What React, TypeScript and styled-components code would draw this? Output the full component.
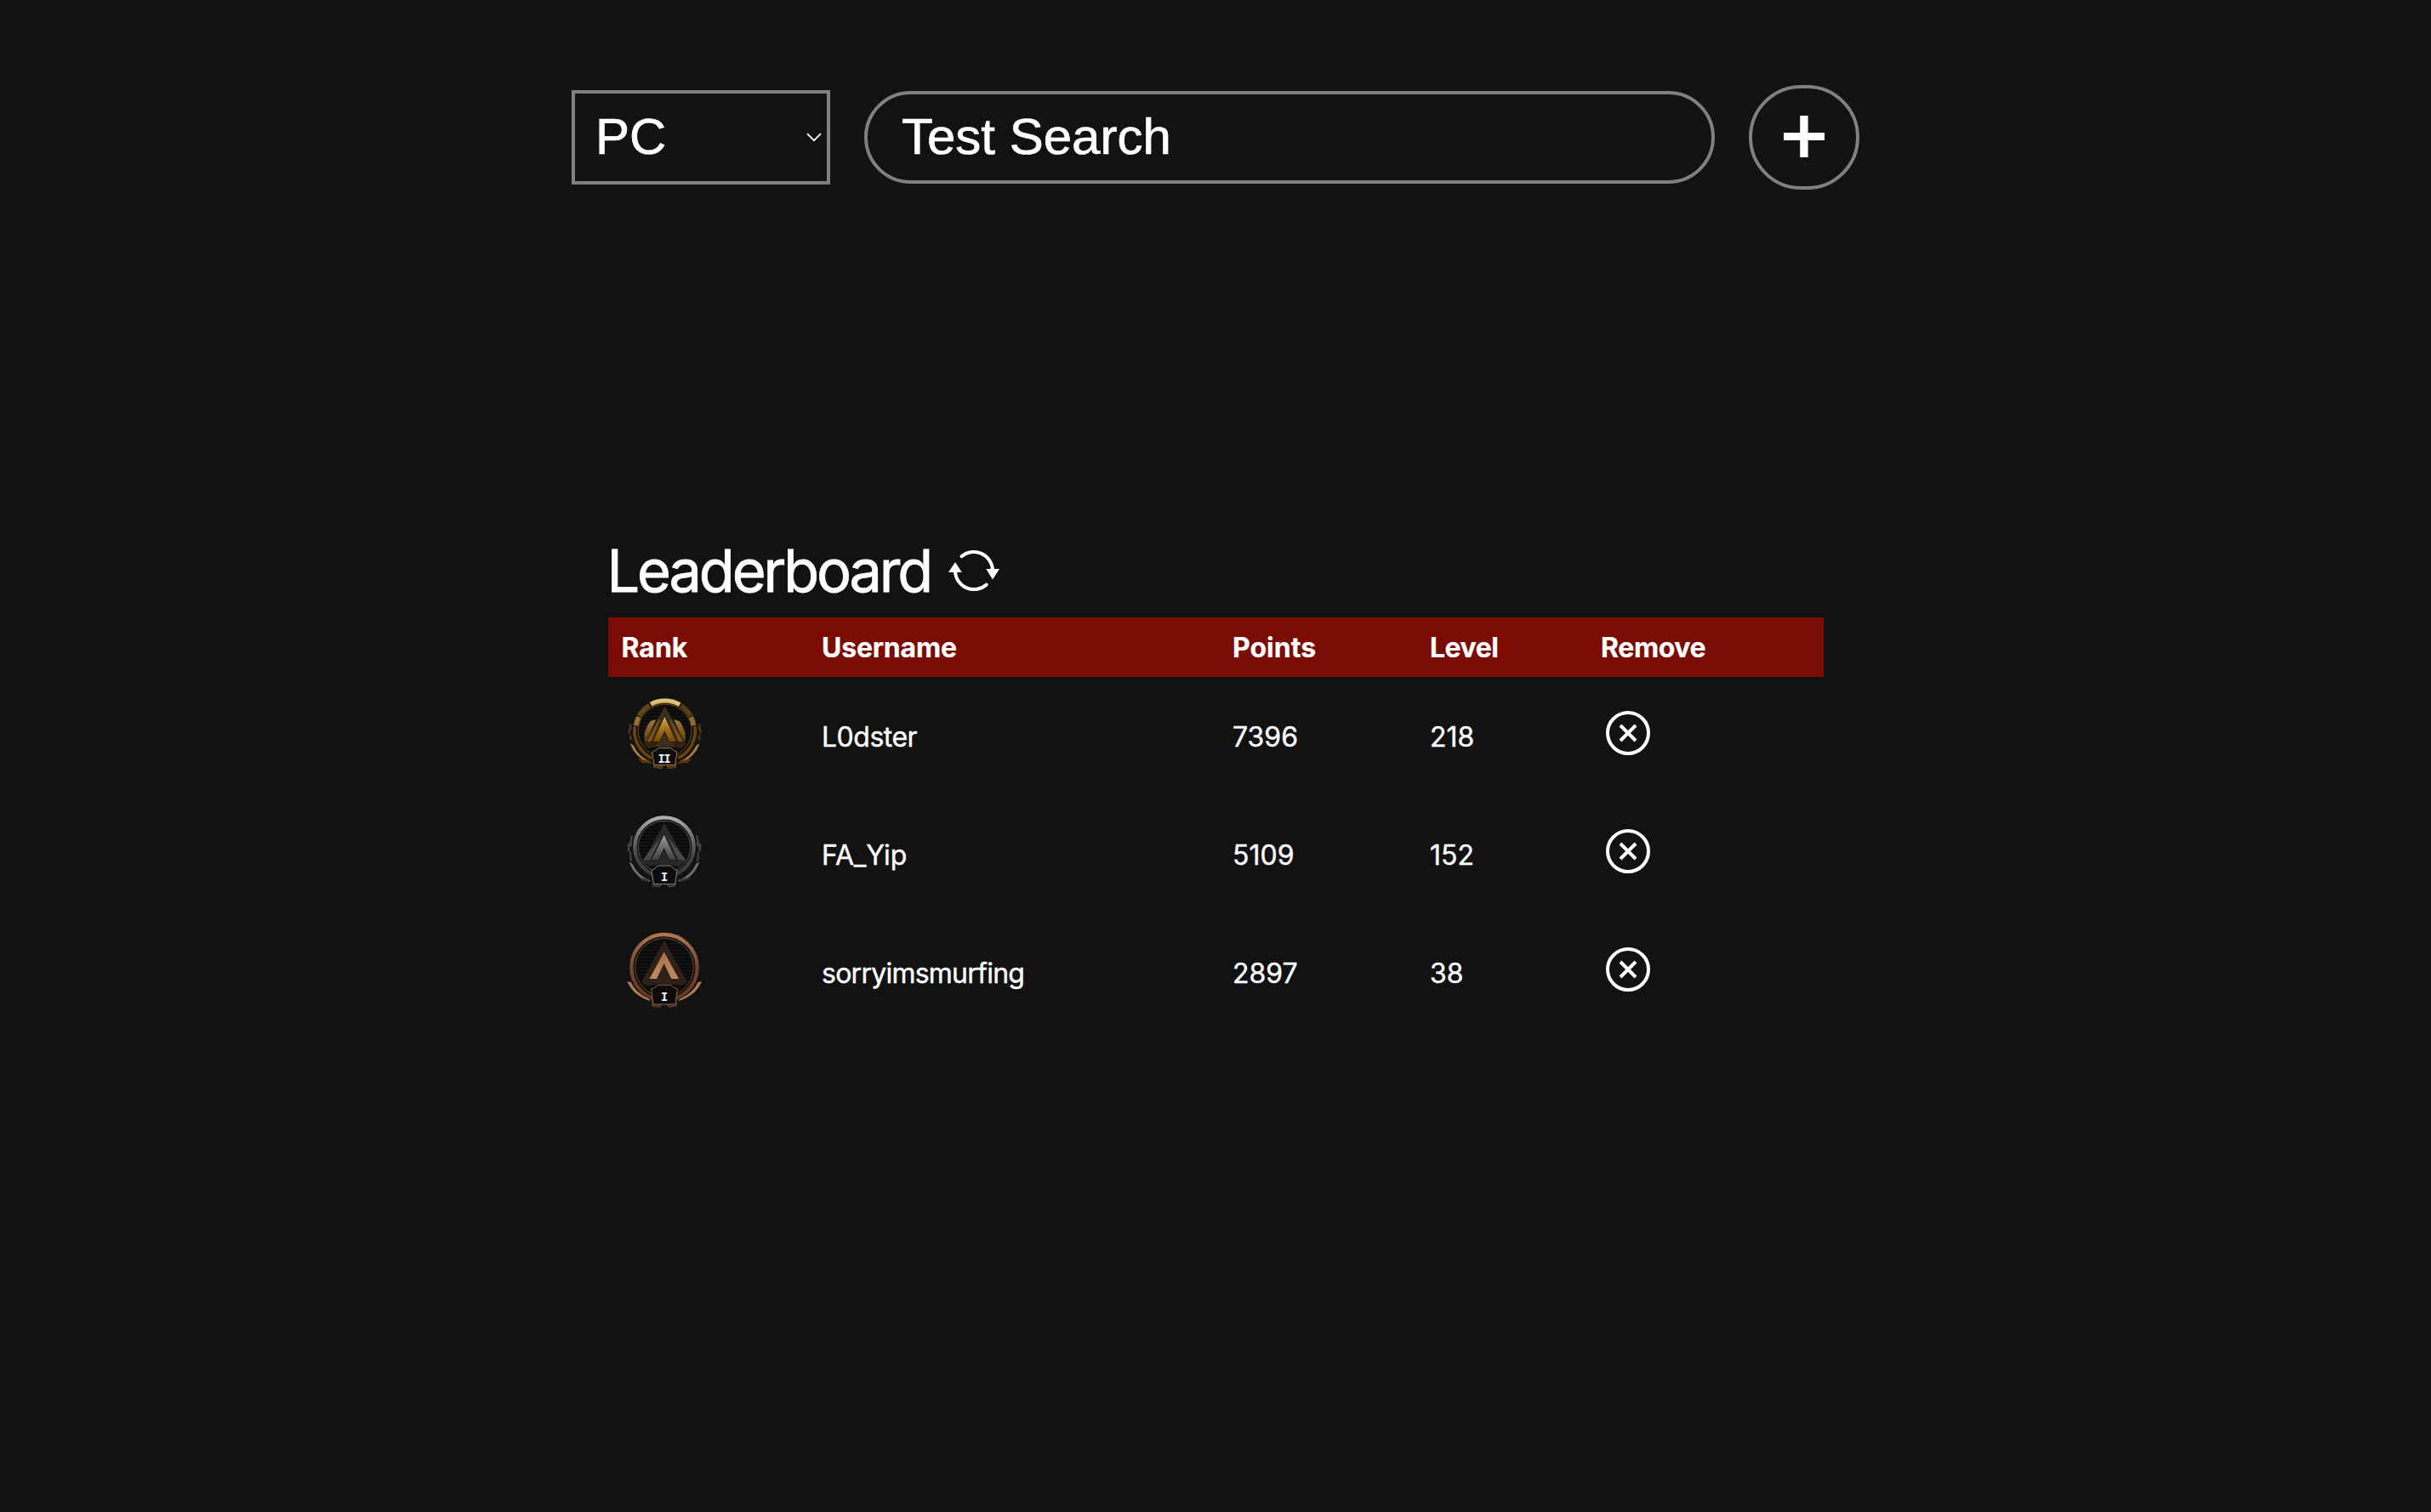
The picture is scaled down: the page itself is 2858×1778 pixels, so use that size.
import React from "react";
import styled, { createGlobalStyle } from "styled-components";

const Global = createGlobalStyle`
  *, *::before, *::after { box-sizing: border-box; }
  body {
    margin: 0;
    background: #121212;
    color: #fff;
    font-family: Inter, "Liberation Sans", sans-serif;
  }
`;

const Page = styled.main`
  display: flex;
  flex-direction: column;
  align-items: center;
  min-height: 1778px;
  padding-top: 100px;
  background: #121212;
`;

const SearchBar = styled.form`
  display: flex;
  align-items: center;
  gap: 40px;
  height: 123px;
`;

const Platform = styled.div`
  display: flex;
  align-items: center;
  justify-content: space-between;
  width: 304px;
  height: 111px;
  padding: 0 6px 2px 24px;
  border: 4px solid #808080;
  font: 60px "Liberation Sans", Arial, sans-serif;
  -webkit-text-stroke: 0.7px #fff;
`;

const Chevron = styled.svg`
  display: block;
  margin-top: 2px;
`;

const SearchInput = styled.input`
  width: 1000px;
  height: 109px;
  padding: 0 40px 2px;
  border: 4px solid #808080;
  border-radius: 60px;
  background: transparent;
  color: #fff;
  outline: none;
  font: 60px "Liberation Sans", Arial, sans-serif;
  -webkit-text-stroke: 0.7px #fff;
  &::placeholder { color: #fff; opacity: 1; }
`;

const AddButton = styled.button`
  display: flex;
  align-items: center;
  justify-content: center;
  width: 130px;
  height: 123px;
  padding: 0 0 2px;
  border: 4px solid #808080;
  border-radius: 65px;
  background: transparent;
`;

const Board = styled.section`
  width: 1429px;
  margin-top: 413px;
`;

const TitleRow = styled.header`
  display: flex;
  align-items: flex-start;
  height: 90px;
`;

const Title = styled.h1`
  width: 401px;
  margin: 0 0 0 -1px;
  font-size: 68.5px;
  font-weight: 400;
  line-height: 71px;
  letter-spacing: -3.15px;
  white-space: nowrap;
  -webkit-text-stroke: 0.8px #fff;
`;

const RefreshButton = styled.button`
  display: flex;
  margin: 9px 0 0;
  padding: 0;
  border: 0;
  background: transparent;
`;

const Row = styled.div<{ $head?: boolean }>`
  display: grid;
  grid-template-columns: 235.5px 483px 232px 201px 1fr;
  align-items: center;
  height: ${(p) => (p.$head ? 70 : 139)}px;
  padding-left: 16px;
  background: ${(p) => (p.$head ? "#7a0c04" : "transparent")};
  font-size: 32px;
  font-weight: ${(p) => (p.$head ? 700 : 400)};
`;

const Cell = styled.span<{ $track?: number; $body?: boolean }>`
  padding-top: ${(p) => (p.$body ? 2 : 0)}px;
  letter-spacing: ${(p) => p.$track ?? 0}px;
  white-space: nowrap;
  -webkit-text-stroke: ${(p) => (p.$body ? 0.4 : 0.2)}px #fff;
`;

const RemoveButton = styled.button`
  display: flex;
  width: 52px;
  height: 52px;
  margin: 0 0 7px 5.5px;
  padding: 0;
  border: 0;
  background: transparent;
`;

const Badge = styled.svg<{ $top: number }>`
  display: block;
  align-self: start;
  width: 110px;
  height: 110px;
  margin: ${(p) => p.$top}px 0 0 -1px;
`;

const Numeral = styled.text`
  fill: #f4f4f4;
  font: bold 41px "DejaVu Sans Mono", "Liberation Mono", monospace;
  letter-spacing: -4px;
`;

/** Arc along a circle; angles in degrees clockwise from twelve o'clock. */
function arc(cx: number, cy: number, r: number, from: number, to: number) {
  const at = (deg: number) => {
    const a = (deg * Math.PI) / 180;
    return `${(cx + r * Math.sin(a)).toFixed(1)} ${(cy - r * Math.cos(a)).toFixed(1)}`;
  };
  return `M${at(from)}A${r} ${r} 0 ${to - from > 180 ? 1 : 0} 1 ${at(to)}`;
}

function Scanlines({ id }: { id: string }) {
  return (
    <pattern id={id} width="10" height="12" patternUnits="userSpaceOnUse">
      <rect width="10" height="12" fill="#0b0b0c" />
      <rect width="10" height="3" fill="#161617" />
    </pattern>
  );
}

function GoldBadge() {
  return (
    <Badge $top={14} viewBox="0 0 330 330">
      <defs>
        <Scanlines id="gold-lines" />
        <linearGradient id="gold-face" x1="0" y1="0" x2="0" y2="1">
          <stop offset="0" stopColor="#d9b25a" />
          <stop offset="0.45" stopColor="#a8741f" />
          <stop offset="1" stopColor="#7a4600" />
        </linearGradient>
        <linearGradient id="gold-wing" x1="0" y1="0" x2="0" y2="1">
          <stop offset="0" stopColor="#a07b3a" />
          <stop offset="1" stopColor="#663b06" />
        </linearGradient>
      </defs>
      <circle cx="155" cy="148" r="114" fill="#14110c" />
      <g fill="none" strokeWidth="17">
        <path d={arc(155, 148, 106, -28, 30)} stroke="#c0994a" />
        <path d={arc(155, 148, 107, -27, 29)} stroke="#dfc27c" strokeWidth="11" />
        <path d={arc(155, 148, 105, 33, 60)} stroke="#5a3e16" />
        <path d={arc(155, 148, 105, -60, -31)} stroke="#634519" />
        <path d={arc(155, 148, 104, 62, 80)} stroke="#8d6a30" />
        <path d={arc(155, 148, 104, -80, -62)} stroke="#987234" />
        <path d={arc(155, 148, 107, 82, 154)} stroke="#6b4309" strokeWidth="11" />
        <path d={arc(155, 148, 107, -154, -82)} stroke="#6b4309" strokeWidth="11" />
      </g>
      <circle cx="155" cy="148" r="94" fill="url(#gold-lines)" stroke="#6c491e" strokeWidth="3" />
      <path d="M29 120l8 8v18l-5 4v12l6 6v16l-8-6v-16l-4-6v-12l4-5zM281 120l-8 8v18l5 4v12l-6 6v16l8-6v-16l4-6v-12l-4-5z" fill="#4a3721" />
      <path d="M32 193l12 6q18 40 60 58l-7 5Q49 240 32 193zM278 193l-12 6q-18 40-60 58l7 5q48-22 65-69z" fill="#a97b3a" />
      <path d="M60 246l42 8 12 10-40-3zM250 246l-42 8-12 10 40-3z" fill="#5b3706" />
      <path d="M155 62l72 128-16 20-30-6h-52l-30 6-16-20z" fill="#39301f" />
      <path d="M82 187h48l-12 20-36-6zM180 187h48v14l-36 6z" fill="#33210b" />
      <path d="M104 114l20-6-36 76h-5v-30q8-14 10-24zM206 114l-20-6 36 76h5v-30q-8-14-10-24z" fill="url(#gold-wing)" />
      <path d="M134 108l3 4-31 74H92zM176 108l-3 4 31 74h14z" fill="#7d5417" />
      <path d="M154 98l41 88h-24l-17-38-18 38h-23z" fill="url(#gold-face)" stroke="#1b150b" strokeWidth="5" paintOrder="stroke" />
      <path d="M116 260v18l30 3v-13zM194 260v18l-30 3v-13z" fill="#503213" stroke="#775026" strokeWidth="2" />
      <path d="M134 209h42l16 12 6 2-7 46h-74l-7-46 6-2z" fill="#0c0d0e" stroke="#a17b48" strokeWidth="3" />
      <Numeral x="130.500" y="260">II</Numeral>
    </Badge>
  );
}

function SilverBadge() {
  return (
    <Badge $top={15} viewBox="0 0 330 330">
      <defs>
        <Scanlines id="silver-lines" />
        <linearGradient id="silver-ring" x1="0" y1="0" x2="0" y2="1">
          <stop offset="0" stopColor="#b0b0b0" />
          <stop offset="0.3" stopColor="#727272" />
          <stop offset="0.7" stopColor="#414043" />
          <stop offset="1" stopColor="#39383b" />
        </linearGradient>
        <linearGradient id="silver-face" x1="0" y1="0" x2="0" y2="1">
          <stop offset="0" stopColor="#a5a5a5" />
          <stop offset="0.5" stopColor="#6a696b" />
          <stop offset="1" stopColor="#424043" />
        </linearGradient>
        <linearGradient id="silver-wing" x1="0" y1="0" x2="0" y2="1">
          <stop offset="0" stopColor="#6c6b6d" />
          <stop offset="1" stopColor="#464548" />
        </linearGradient>
      </defs>
      <circle cx="153" cy="138" r="104" fill="#111112" stroke="url(#silver-ring)" strokeWidth="13" />
      <circle cx="153" cy="138" r="92" fill="url(#silver-lines)" stroke="#616163" strokeWidth="2.5" />
      <path d="M35 96l-4 26-8 6v22l8 6v28l10 8q-6-24-4-36l-6-4v-14l8-4q-2-18 3-34zM271 96l4 26 8 6v22l-8 6v28l-10 8q6-24 4-36l6-4v-14l-8-4q2-18-3-34z" fill="#434245" />
      <path d="M29 190l12 8q18 42 64 58l-7 5Q46 243 29 190zM277 190l-12 8q-18 42-64 58l7 5q52-18 69-71z" fill="#737275" />
      <path d="M60 244l36 8 6 10-30-6zM246 244l-36 8-6 10 30-6z" fill="#343336" />
      <path d="M153 54l76 134-24 18-22-4h-60l-22 4-24-18z" fill="#28282a" />
      <path d="M134 108l-42 76H78zM172 108l42 76h14z" fill="#49484b" />
      <path d="M141 101l-39 83H91zM165 101l39 83h11z" fill="url(#silver-wing)" />
      <path d="M152 95l43 89h-23l-20-43-20 43h-24z" fill="url(#silver-face)" stroke="#151516" strokeWidth="5" paintOrder="stroke" />
      <path d="M114 258v18l24 3 4-8zM192 258v18l-24 3-4-8z" fill="#303033" stroke="#555458" strokeWidth="2" />
      <path d="M131 204h44l15 13 8 3-7 49h-76l-7-49 8-3z" fill="#0b0c0d" stroke="#828185" strokeWidth="3" />
      <Numeral x="141" y="258">I</Numeral>
    </Badge>
  );
}

function BronzeBadge() {
  return (
    <Badge $top={11} viewBox="0 0 330 330">
      <defs>
        <Scanlines id="bronze-lines" />
        <linearGradient id="bronze-ring" x1="0" y1="0" x2="0" y2="1">
          <stop offset="0" stopColor="#b17650" />
          <stop offset="0.45" stopColor="#75482e" />
          <stop offset="1" stopColor="#5e341c" />
        </linearGradient>
        <linearGradient id="bronze-face" x1="0" y1="0" x2="0" y2="1">
          <stop offset="0" stopColor="#a8714d" />
          <stop offset="1" stopColor="#c08a60" />
        </linearGradient>
      </defs>
      <circle cx="153" cy="158" r="116" fill="#111010" stroke="url(#bronze-ring)" strokeWidth="13" />
      <circle cx="153" cy="158" r="103" fill="url(#bronze-lines)" stroke="#7b4f37" strokeWidth="2.5" />
      <path d="M22 207l13 3q17 38 67 61v5Q41 255 22 207zM285 207l-13 3q-17 38-67 61v5q61-21 80-69z" fill="#b07c5a" />
      <path d="M153 63l74 134 8 12-24 14-28-6h-60l-28 6-24-14 8-12z" fill="#2f201a" />
      <path d="M152 103l52 95h-26l-26-54-26 54h-25z" fill="url(#bronze-face)" />
      <path d="M110 277v18l28 3 4-8zM196 277v18l-28 3-4-8z" fill="#4a2d20" stroke="#704730" strokeWidth="2" />
      <path d="M131 220h44l15 11 9 3-7 54h-78l-7-54 9-3z" fill="#0c0b0b" stroke="#8f6146" strokeWidth="3" />
      <Numeral x="141" y="275">I</Numeral>
    </Badge>
  );
}

function RemoveIcon() {
  return (
    <svg width="52" height="52" viewBox="0 0 52 52" fill="none" stroke="#fff" strokeWidth="4">
      <circle cx="26" cy="26" r="24" />
      <path d="M17 17l18 18M35 17L17 35" />
    </svg>
  );
}

const players = [
  { name: "L0dster", track: -0.5, points: "7396", level: "218", badge: <GoldBadge /> },
  { name: "FA_Yip", track: -0.1, points: "5109", level: "152", badge: <SilverBadge /> },
  { name: "sorryimsmurfing", track: -0.75, points: "2897", level: "38", badge: <BronzeBadge /> },
];

export default function App() {
  return (
    <Page>
      <Global />
      <SearchBar>
        <Platform>
          PC
          <Chevron width="18" height="11" viewBox="0 0 18 11" fill="none" stroke="#fff" strokeWidth="1.8">
            <path d="M1 1.200l8 8 8-8" />
          </Chevron>
        </Platform>
        <SearchInput placeholder="Test Search" />
        <AddButton type="button" aria-label="Add">
          <svg width="48" height="49" viewBox="0 0 48 49" fill="#fff">
            <path d="M19.200 0h9.400v20H48v9H28.600v20h-9.400V29H0v-9h19.200z" />
          </svg>
        </AddButton>
      </SearchBar>
      <Board>
        <TitleRow>
          <Title>Leaderboard</Title>
          <RefreshButton type="button" aria-label="Refresh">
            <svg width="60" height="52" viewBox="15 15 60 52" fill="none" stroke="#fff" strokeWidth="4" strokeLinecap="round">
              <path d="M30.500 24.300A22.200 22.200 0 0 1 67 40M59.800 57.500A22.200 22.200 0 0 1 22.900 42" />
              <path d="M59.300 39H75L67 51.500zM15 43h15.800L23 31z" fill="#fff" stroke="none" />
            </svg>
          </RefreshButton>
        </TitleRow>
        <Row $head>
          <Cell>Rank</Cell>
          <Cell $track={-0.2}>Username</Cell>
          <Cell>Points</Cell>
          <Cell $track={-0.5}>Level</Cell>
          <Cell $track={-0.4}>Remove</Cell>
        </Row>
        {players.map((p) => (
          <Row key={p.name}>
            {p.badge}
            <Cell $body $track={p.track}>{p.name}</Cell>
            <Cell $body>{p.points}</Cell>
            <Cell $body>{p.level}</Cell>
            <RemoveButton type="button" aria-label="Remove">
              <RemoveIcon />
            </RemoveButton>
          </Row>
        ))}
      </Board>
    </Page>
  );
}
